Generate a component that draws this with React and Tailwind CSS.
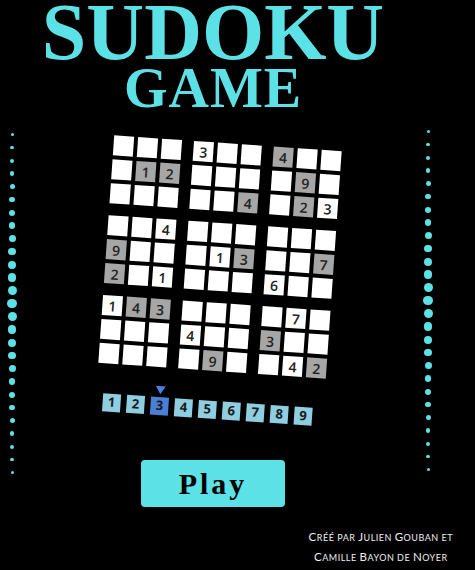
import React from "react";

// each block: 9 cells, row by row. "" = empty, g = grey background
const blocks = [
    ["", "", "", "", "1g", "2g", "", "", ""],
    ["3", "", "", "", "", "", "", "", "4g"],
    ["4g", "", "", "", "9g", "", "", "2g", "3"],
    ["", "", "4", "9g", "", "", "2g", "", "1"],
    ["", "", "", "", "1", "3g", "", "", ""],
    ["", "", "", "", "", "7g", "6", "", ""],
    ["1", "4g", "3g", "", "", "", "", "", ""],
    ["", "", "", "4", "", "", "", "9g", ""],
    ["", "7", "", "3g", "", "", "", "4", "2g"],
];

const Dots = ({ className }) => {
    const dots = Array.from({ length: 27 }, (_, i) => {
        const t = 1 - Math.abs(i - 13) / 13;
        return 3 + 6.5 * t;
    });
    return (
        <div className={`w-[24px] flex flex-col items-center ${className}`}>
            {dots.map((s, i) => (
                <div key={i} className="h-[13px] flex items-center justify-center">
                    <div className="rounded-full bg-[#5ce1e6]" style={{ width: s, height: s }} />
                </div>
            ))}
        </div>
    );
};

const Cell = ({ value }) => {
    const grey = value.endsWith("g");
    const digit = value.replace("g", "");
    return (
        <div
            className={`w-[20px] h-[20px] flex items-center justify-center text-[14px] font-semibold text-[#222] ${grey ? "bg-[#a6a6a6]" : "bg-white"}`}
        >
            {digit}
        </div>
    );
};

// small caps done by hand: capitals bigger, the rest uppercase smaller
const SmallCaps = ({ text }) =>
    text.split("").map((ch, i) =>
        ch !== ch.toLowerCase() ? (
            <span key={i} className="text-[11.5px]">{ch}</span>
        ) : (
            <span key={i} className="text-[9px]">{ch.toUpperCase()}</span>
        )
    );

export default function App() {
    return (
        <div className="w-[475px] min-h-[570px] bg-black overflow-hidden" style={{ fontFamily: '"Open Sans", sans-serif' }}>
            <div className="flex">
                <Dots className="pt-[128px]" />

                <main className="flex-1 flex flex-col items-center">
                    <h1
                        className="pr-[14px] text-center text-[#5ce1e6] font-bold"
                        style={{ fontFamily: '"Liberation Serif", serif' }}
                    >
                        <div className="text-[80px] leading-[64px]">SUDOKU</div>
                        <div className="text-[56px] leading-[48px] tracking-[1px]">GAME</div>
                    </h1>

                    <div className="mt-[31px] w-[228px] rotate-[4deg] origin-[114px_114px] flex flex-col items-center">
                        <div className="grid grid-cols-3 gap-[12px]">
                            {blocks.map((b, bi) => (
                                <div key={bi} className="grid grid-cols-3 gap-[4px]">
                                    {b.map((v, ci) => (
                                        <Cell key={ci} value={v} />
                                    ))}
                                </div>
                            ))}
                        </div>

                        <div className="mt-[30px] mr-[4px] flex gap-[6px]">
                            {[1, 2, 3, 4, 5, 6, 7, 8, 9].map((n) => (
                                <div
                                    key={n}
                                    className={`relative w-[18px] h-[18px] flex items-center justify-center text-[13px] font-bold text-[#1a1a1a] ${n === 3 ? "bg-[#4a7fd6]" : "bg-[#8fcde0]"}`}
                                >
                                    {n === 3 && (
                                        <div className="absolute -top-[11px] left-1/2 -translate-x-1/2 w-0 h-0 border-l-[5px] border-r-[5px] border-t-[8px] border-l-transparent border-r-transparent border-t-[#4a80d9]" />
                                    )}
                                    {n}
                                </div>
                            ))}
                        </div>
                    </div>

                    <button
                        className="mt-[41px] mr-[14px] w-[144px] h-[47px] rounded-[4px] bg-[#5ce1e6] text-black text-[30px] font-bold tracking-[3px] leading-none"
                        style={{ fontFamily: '"Liberation Serif", serif' }}
                    >
                        Play
                    </button>
                </main>

                <Dots className="pt-[125px]" />
                <div className="w-[35px]" />
            </div>

            <div className="flex justify-end pr-[22px] mt-[19px]">
                <p className="text-center leading-[17px] tracking-[0.5px] text-[#eeeeee]" style={{ fontFamily: "Lato, sans-serif" }}>
                    <SmallCaps text="Créé par Julien Gouban et" />
                    <br />
                    <SmallCaps text="Camille Bayon de Noyer" />
                </p>
            </div>
        </div>
    );
}
